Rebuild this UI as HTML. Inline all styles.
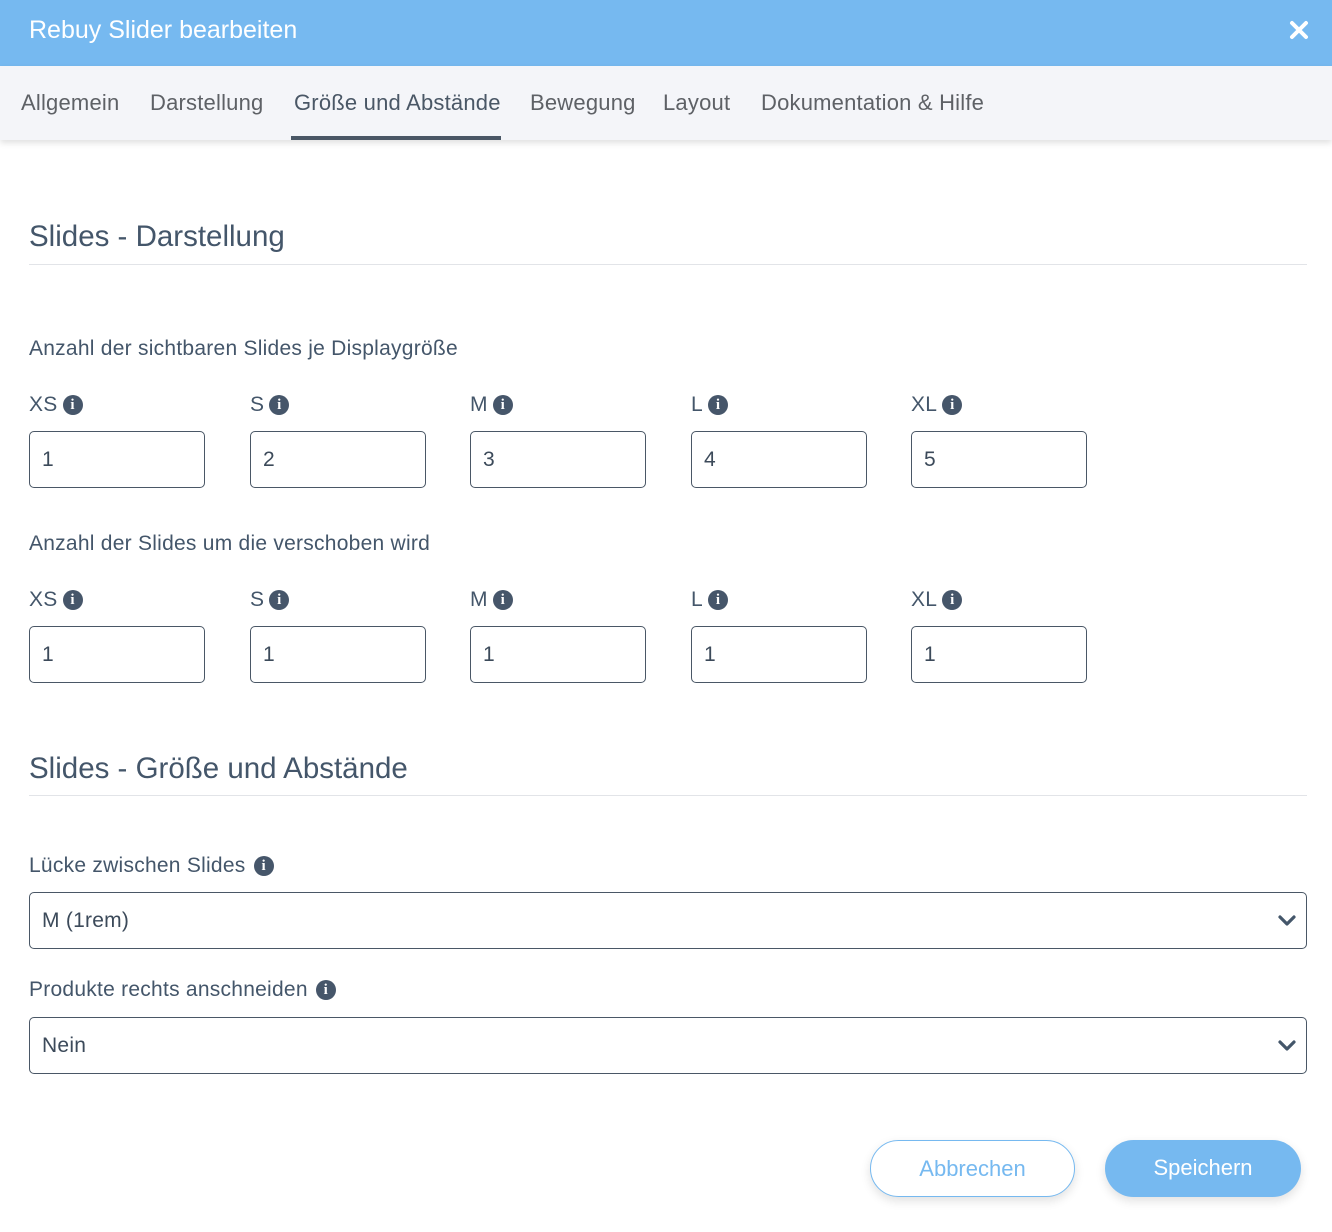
<!DOCTYPE html>
<html><head><meta charset="utf-8"><style>
*{box-sizing:border-box;margin:0;padding:0}
body{width:1332px;height:1232px;position:relative;background:#fff;font-family:"Liberation Sans",Arial,sans-serif;color:#44566a;overflow:hidden}
.a{position:absolute;white-space:nowrap}
.hdr{left:0;top:0;width:1332px;height:66px;background:#76b9f0}
.tabs{left:0;top:66px;width:1332px;height:74px;background:#f4f5f9;box-shadow:0 3px 6px rgba(0,0,0,.12)}
.tab{top:90px;font-size:22px;letter-spacing:.2px;color:#5e6166}
.h2{font-size:29.5px;color:#44566a}
.hr{left:29px;width:1278px;height:1px;background:#e2e4e8}
.lbl{font-size:21px;letter-spacing:.25px;color:#44566a}
.inp{width:176px;height:57px;border:1px solid #4a5766;border-radius:5px;font-size:21px;padding:16px 0 0 12px;color:#3c4a5a}
.sel{left:29px;width:1278px;height:57px;border:1px solid #4a5766;border-radius:5px;font-size:21px;letter-spacing:.25px;padding:16px 0 0 12px;color:#3c4a5a}
.ic{display:inline-block;width:20px;height:20px;border-radius:50%;background:#46566a;color:#fff;font:bold 15px/20px "Liberation Serif",serif;text-align:center;vertical-align:2px;margin-left:5px;letter-spacing:0}
.btn{top:1140px;height:57px;border-radius:29px;font-size:22px;text-align:center;line-height:56px;box-shadow:0 4px 10px rgba(0,0,0,.12)}
</style></head><body>
<div class="a hdr"></div>
<div class="a" style="left:29px;top:16px;font-size:25px;color:#fff">Rebuy Slider bearbeiten</div>
<svg class="a" style="left:1289px;top:20px" width="20" height="20" viewBox="0 0 20 20"><path d="M3 3L17 17M17 3L3 17" stroke="#fff" stroke-width="4" stroke-linecap="round"/></svg>
<div class="a tabs"></div>
<div class="a tab" style="left:21px">Allgemein</div>
<div class="a tab" style="left:150px">Darstellung</div>
<div class="a tab" style="left:294px;color:#4a5766">Größe und Abstände</div>
<div class="a" style="left:291px;top:136px;width:210px;height:4px;background:#4a5766"></div>
<div class="a tab" style="left:530px">Bewegung</div>
<div class="a tab" style="left:663px">Layout</div>
<div class="a tab" style="left:761px">Dokumentation &amp; Hilfe</div>

<div class="a h2" style="left:29px;top:220px">Slides - Darstellung</div>
<div class="a hr" style="top:264px"></div>
<div class="a lbl" style="left:29px;top:337px">Anzahl der sichtbaren Slides je Displaygröße</div>

<div class="a lbl" style="left:29px;top:393px">XS<span class="ic">i</span></div>
<div class="a lbl" style="left:250px;top:393px">S<span class="ic">i</span></div>
<div class="a lbl" style="left:470px;top:393px">M<span class="ic">i</span></div>
<div class="a lbl" style="left:691px;top:393px">L<span class="ic">i</span></div>
<div class="a lbl" style="left:911px;top:393px">XL<span class="ic">i</span></div>
<div class="a inp" style="left:29px;top:431px">1</div>
<div class="a inp" style="left:250px;top:431px">2</div>
<div class="a inp" style="left:470px;top:431px">3</div>
<div class="a inp" style="left:691px;top:431px">4</div>
<div class="a inp" style="left:911px;top:431px">5</div>

<div class="a lbl" style="left:29px;top:532px">Anzahl der Slides um die verschoben wird</div>
<div class="a lbl" style="left:29px;top:588px">XS<span class="ic">i</span></div>
<div class="a lbl" style="left:250px;top:588px">S<span class="ic">i</span></div>
<div class="a lbl" style="left:470px;top:588px">M<span class="ic">i</span></div>
<div class="a lbl" style="left:691px;top:588px">L<span class="ic">i</span></div>
<div class="a lbl" style="left:911px;top:588px">XL<span class="ic">i</span></div>
<div class="a inp" style="left:29px;top:626px">1</div>
<div class="a inp" style="left:250px;top:626px">1</div>
<div class="a inp" style="left:470px;top:626px">1</div>
<div class="a inp" style="left:691px;top:626px">1</div>
<div class="a inp" style="left:911px;top:626px">1</div>

<div class="a h2" style="left:29px;top:752px">Slides - Größe und Abstände</div>
<div class="a hr" style="top:795px"></div>

<div class="a lbl" style="left:29px;top:854px">Lücke zwischen Slides<span class="ic" style="margin-left:8px">i</span></div>
<div class="a sel" style="top:892px">M (1rem)</div>
<svg class="a" style="left:1277px;top:914px" width="20" height="14" viewBox="0 0 20 14"><path d="M3 3L10 10L17 3" fill="none" stroke="#44566a" stroke-width="3.2" stroke-linecap="round" stroke-linejoin="round"/></svg>

<div class="a lbl" style="left:29px;top:978px">Produkte rechts anschneiden<span class="ic" style="margin-left:8px">i</span></div>
<div class="a sel" style="top:1017px">Nein</div>
<svg class="a" style="left:1277px;top:1039px" width="20" height="14" viewBox="0 0 20 14"><path d="M3 3L10 10L17 3" fill="none" stroke="#44566a" stroke-width="3.2" stroke-linecap="round" stroke-linejoin="round"/></svg>

<div class="a btn" style="left:870px;width:205px;border:1px solid #76b9f0;color:#76b9f0;background:#fff">Abbrechen</div>
<div class="a btn" style="left:1105px;width:196px;background:#76b9f0;color:#fff">Speichern</div>
</body></html>
